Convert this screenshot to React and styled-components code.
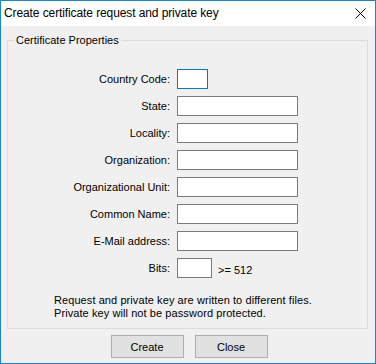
import React from 'react';
import styled, { createGlobalStyle } from 'styled-components';

const GlobalStyle = createGlobalStyle`
  html, body {
    margin: 0;
    padding: 0;
    background: #f0f0f0;
  }
  * {
    box-sizing: border-box;
  }
`;

const Window = styled.div`
  width: 376px;
  height: 364px;
  border: 1px solid #1883d7;
  background: #f0f0f0;
  display: flex;
  flex-direction: column;
  font-family: 'Liberation Sans', Arial, sans-serif;
  font-size: 11px;
  color: #000;
`;

const TitleBar = styled.div`
  height: 25px;
  flex: none;
  background: #fff;
  display: flex;
  align-items: center;
  justify-content: space-between;
  padding: 0 0 0 3px;
`;

const Title = styled.span`
  font-size: 12px;
  line-height: 16px;
  letter-spacing: -0.1px;
  padding-bottom: 1px;
`;

const CloseButton = styled.div`
  width: 30px;
  height: 25px;
  display: flex;
  align-items: center;
  justify-content: center;
`;

const Body = styled.div`
  flex: 1;
  display: flex;
  flex-direction: column;
  padding: 8px 7px 0 6px;
`;

const GroupBox = styled.fieldset`
  margin: 0;
  padding: 0 0 8px 0;
  border: 1px solid #dcdcdc;
  min-width: 0;
`;

const Legend = styled.legend`
  margin-left: 6px;
  padding: 0 2px;
  line-height: 13px;
  font-size: 11px;
`;

const Form = styled.div`
  display: grid;
  grid-template-columns: 162px auto;
  grid-auto-rows: 20px;
  column-gap: 7px;
  row-gap: 7px;
  padding-top: 22px;
  align-items: center;
`;

const Label = styled.label`
  text-align: right;
  line-height: 13px;
`;

const Field = styled.div`
  display: flex;
  align-items: center;
  gap: 6px;
`;

const Input = styled.div`
  width: ${({ $w }) => $w}px;
  height: 20px;
  background: #fff;
  border: 1px solid ${({ $focused }) => ($focused ? '#0078d7' : '#7a7a7a')};
`;

const Hint = styled.span`
  line-height: 13px;
  padding-top: 4px;
`;

const Note = styled.div`
  margin-top: 16px;
  padding-left: 46px;
  line-height: 13px;
  letter-spacing: 0.08px;
`;

const ButtonRow = styled.div`
  display: flex;
  justify-content: center;
  gap: 11px;
  padding: 6px 0 0 3px;
`;

const Button = styled.div`
  width: 73px;
  height: 23px;
  background: #e1e1e1;
  border: 1px solid #adadad;
  display: flex;
  align-items: center;
  justify-content: center;
  font-size: 11px;
`;

const fields = [
  { label: 'Country Code:', width: 31, focused: true },
  { label: 'State:', width: 121 },
  { label: 'Locality:', width: 121 },
  { label: 'Organization:', width: 121 },
  { label: 'Organizational Unit:', width: 121 },
  { label: 'Common Name:', width: 121 },
  { label: 'E-Mail address:', width: 121 },
  { label: 'Bits:', width: 35, hint: '>= 512' },
];

export default function App() {
  return (
    <>
      <GlobalStyle />
      <Window>
        <TitleBar>
          <Title>Create certificate request and private key</Title>
          <CloseButton>
            <svg width="11" height="11" viewBox="0 0 11 11">
              <path d="M0.5 0.5 L10.5 10.5 M10.5 0.5 L0.5 10.5" stroke="#000" strokeWidth="1" fill="none" />
            </svg>
          </CloseButton>
        </TitleBar>
        <Body>
          <GroupBox>
            <Legend>Certificate Properties</Legend>
            <Form>
              {fields.map((f) => (
                <React.Fragment key={f.label}>
                  <Label>{f.label}</Label>
                  <Field>
                    <Input $w={f.width} $focused={f.focused} />
                    {f.hint && <Hint>{f.hint}</Hint>}
                  </Field>
                </React.Fragment>
              ))}
            </Form>
            <Note>
              Request and private key are written to different files.
              <br />
              Private key will not be password protected.
            </Note>
          </GroupBox>
          <ButtonRow>
            <Button>Create</Button>
            <Button>Close</Button>
          </ButtonRow>
        </Body>
      </Window>
    </>
  );
}
